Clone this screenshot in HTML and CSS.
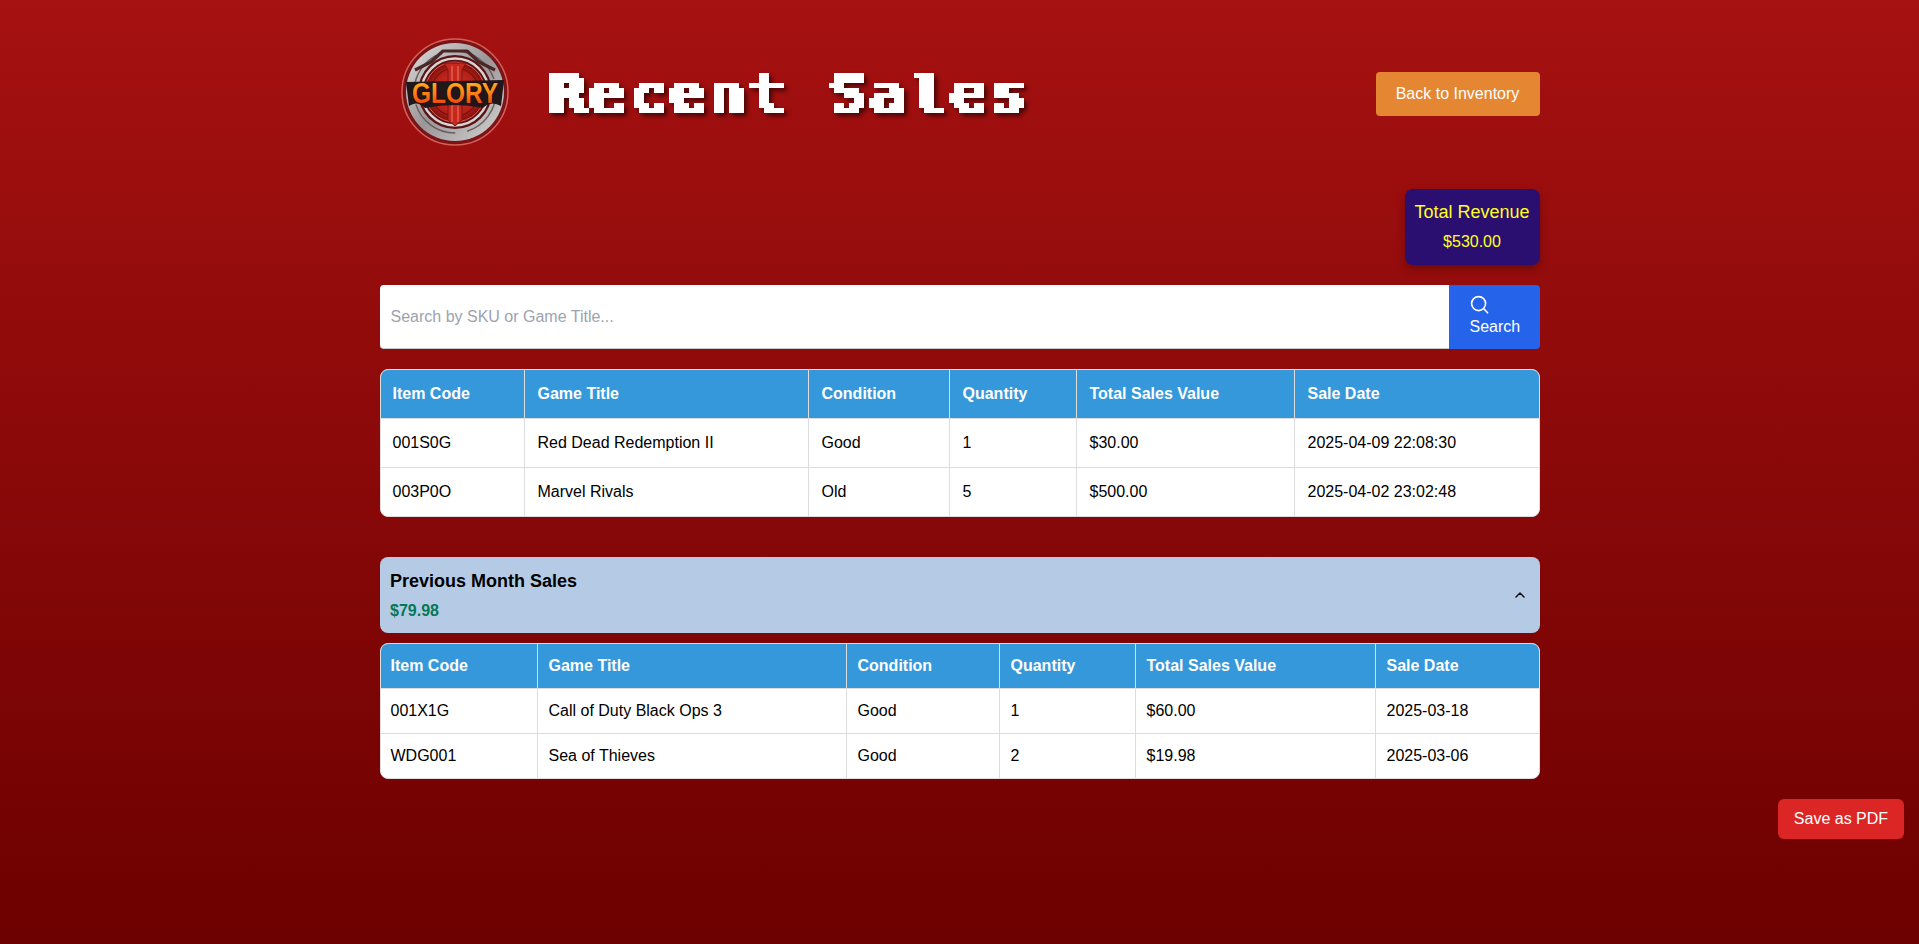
FILE: index.html
```html
<!DOCTYPE html>
<html lang="en">
<head>
<meta charset="utf-8">
<title>Recent Sales</title>
<link rel="stylesheet" href="styles.css">
</head>
<body>
<svg class="defs" width="0" height="0" aria-hidden="true">
  <filter id="pixelate" x="0" y="0" width="100%" height="100%" color-interpolation-filters="sRGB">
    <feMorphology in="SourceGraphic" operator="dilate" radius="3 1" result="thick"/>
    <feFlood x="2" y="2" width="1" height="1" flood-color="#fff"/>
    <feComposite width="5" height="5"/>
    <feTile result="grid"/>
    <feComposite in="thick" in2="grid" operator="in"/>
    <feMorphology operator="dilate" radius="2"/>
    <feComponentTransfer>
      <feFuncR type="discrete" tableValues="1"/>
      <feFuncG type="discrete" tableValues="1"/>
      <feFuncB type="discrete" tableValues="1"/>
      <feFuncA type="discrete" tableValues="0 1 1"/>
    </feComponentTransfer>
  </filter>
</svg>
<main class="page">
  <header class="top">
    <div class="brand">
      <svg class="logo" viewBox="0 0 120 120" role="img" aria-label="Glory logo">
        <defs>
          <linearGradient id="steel" x1="0" y1="0" x2="1" y2="1">
            <stop offset="0" stop-color="#e2dfdf"/><stop offset=".5" stop-color="#9a9697"/><stop offset="1" stop-color="#d8d5d5"/>
          </linearGradient>
          <radialGradient id="core"><stop offset="0" stop-color="#d8352a"/><stop offset=".75" stop-color="#b32018"/><stop offset="1" stop-color="#7d110e"/></radialGradient>
          <linearGradient id="word" x1="0" y1="0" x2="0" y2="1">
            <stop offset="0" stop-color="#ffc21f"/><stop offset=".55" stop-color="#ff7a14"/><stop offset="1" stop-color="#e0280c"/>
          </linearGradient>
        </defs>
        <circle cx="60" cy="60" r="53" fill="#7a1416" stroke="#d8605a" stroke-width="1.5"/>
        <circle cx="60" cy="60" r="49" fill="url(#steel)"/>
        <circle cx="60" cy="60" r="41" fill="none" stroke="#6a5c5c" stroke-width="1.5" stroke-dasharray="52 12"/>
        <path d="M20 38 L36 30 L48 19 L72 19 L84 30 L100 38" fill="none" stroke="#4a2626" stroke-width="3.2" stroke-linejoin="round"/>
        <circle cx="60" cy="60" r="37" fill="#5a1415"/>
        <circle cx="60" cy="60" r="33.5" fill="none" stroke="#d8d4d4" stroke-width="2.4"/>
        <circle cx="60" cy="60" r="30" fill="url(#core)" stroke="#f0574a" stroke-width="1"/>
        <circle cx="60" cy="60" r="24" fill="none" stroke="#7d110e" stroke-width="1.2"/>
        <path d="M49 31H71L67 38V88L60 94L53 88V38Z" fill="#c5281e" stroke="#7e1512" stroke-width="1"/>
        <path d="M57 34V90M63 34V90" stroke="#f06a4f" stroke-width="1.2"/>
        <path d="M11 50 L109 48 L106 74 Q96 68 88 76 Q60 70 30 76 Q22 68 14 74 Z" fill="#21161a"/>
        <text class="logo-word" x="60" y="71" text-anchor="middle" textLength="86" lengthAdjust="spacingAndGlyphs">GLORY</text>
      </svg>
      <h1 class="title"><span class="title-text">Recent Sales</span></h1>
    </div>
    <a class="back" href="#">Back to Inventory</a>
  </header>

  <section class="revenue-row">
    <div class="revenue">
      <div class="revenue-label">Total Revenue</div>
      <div class="revenue-value">$530.00</div>
    </div>
  </section>

  <form class="search">
    <input class="search-input" type="text" placeholder="Search by SKU or Game Title...">
    <button class="search-btn" type="button">
      <svg class="search-icon" viewBox="0 0 20 20" fill="none" stroke="currentColor" stroke-width="1.6" stroke-linecap="round"><circle cx="8.6" cy="8.6" r="7"/><path d="M13.8 13.8 17.6 17.8"/></svg>
      <span>Search</span>
    </button>
  </form>

  <div class="table-wrap">
    <table class="sales sales-current">
      <colgroup><col class="c1"><col class="c2"><col class="c3"><col class="c4"><col class="c5"><col class="c6"></colgroup>
      <thead><tr><th>Item Code</th><th>Game Title</th><th>Condition</th><th>Quantity</th><th>Total Sales Value</th><th>Sale Date</th></tr></thead>
      <tbody>
        <tr><td>001S0G</td><td>Red Dead Redemption II</td><td>Good</td><td>1</td><td>$30.00</td><td>2025-04-09 22:08:30</td></tr>
        <tr><td>003P0O</td><td>Marvel Rivals</td><td>Old</td><td>5</td><td>$500.00</td><td>2025-04-02 23:02:48</td></tr>
      </tbody>
    </table>
  </div>

  <div class="prev-head">
    <div>
      <div class="prev-title">Previous Month Sales</div>
      <div class="prev-total">$79.98</div>
    </div>
    <svg class="chevron" viewBox="0 0 12 12" fill="none" stroke="currentColor" stroke-width="1.5" stroke-linecap="round" stroke-linejoin="round"><path d="M2 8 6 4 10 8"/></svg>
  </div>

  <div class="table-wrap table-prev">
    <table class="sales sales-prev">
      <colgroup><col class="p1"><col class="p2"><col class="p3"><col class="p4"><col class="p5"><col class="p6"></colgroup>
      <thead><tr><th>Item Code</th><th>Game Title</th><th>Condition</th><th>Quantity</th><th>Total Sales Value</th><th>Sale Date</th></tr></thead>
      <tbody>
        <tr><td>001X1G</td><td>Call of Duty Black Ops 3</td><td>Good</td><td>1</td><td>$60.00</td><td>2025-03-18</td></tr>
        <tr><td>WDG001</td><td>Sea of Thieves</td><td>Good</td><td>2</td><td>$19.98</td><td>2025-03-06</td></tr>
      </tbody>
    </table>
  </div>
</main>
<button class="pdf" type="button">Save as PDF</button>
</body>
</html>
```
FILE: styles.css
```css
* { box-sizing: border-box; }
html, body { height: 100%; }
body {
  margin: 0;
  min-height: 944px;
  overflow: hidden;
  background: linear-gradient(to bottom, #a61111, #6d0000);
  font-family: "Liberation Sans", Arial, sans-serif;
  font-size: 16px;
  color: #000;
}
.defs { position: absolute; }
.page { width: 1160px; margin: 0 auto; padding-top: 33px; }

.top { display: flex; align-items: center; justify-content: space-between; height: 120px; }
.brand { display: flex; align-items: center; gap: 34px; }
.logo { width: 120px; height: 120px; margin-left: 15px; margin-top: -2px; display: block; }
.logo-word { font-family: "Liberation Sans", Arial, sans-serif; font-weight: 700; font-size: 29px; fill: url(#word); stroke: #1d0c0c; stroke-width: 1.2; paint-order: stroke; }
.title {
  margin: 4px 0 0;
  width: 520px;
  height: 64px;
  filter: url(#pixelate) drop-shadow(3px 3px 2px rgba(0, 0, 0, .55));
  color: #fff;
}
.title-text {
  display: inline-block;
  transform: scaleX(1.2);
  transform-origin: left top;
  font-family: "DejaVu Sans Mono", monospace;
  font-weight: 400;
  font-size: 49px;
  line-height: 64px;
  letter-spacing: 4px;
  white-space: nowrap;
}
.back {
  display: block;
  width: 164px;
  height: 44px;
  margin-top: 2px;
  line-height: 44px;
  text-align: center;
  color: #fff;
  background: #e58632;
  border-radius: 4px;
  text-decoration: none;
}

.revenue-row { display: flex; justify-content: flex-end; margin-top: 36px; }
.revenue {
  width: 135px;
  height: 76px;
  padding-top: 13px;
  text-align: center;
  background: #2a0f70;
  border-radius: 8px;
  color: #ffff1f;
  box-shadow: 0 4px 8px rgba(0, 0, 0, .25);
}
.revenue-label { font-size: 18px; line-height: 21px; }
.revenue-value { margin-top: 10px; line-height: 18px; }

.search { display: flex; height: 64px; margin-top: 20px; }
.search-input {
  flex: 1;
  min-width: 0;
  height: 64px;
  padding: 0 11px;
  border: 0;
  border-bottom: 1px solid #c8c8c8;
  border-radius: 4px 0 0 4px;
  background: #fff;
  font: 16px "Liberation Sans", Arial, sans-serif;
}
.search-input::placeholder { color: #9ca3af; opacity: 1; }
.search-btn {
  display: flex;
  flex-direction: column;
  align-items: flex-start;
  width: 91px;
  height: 64px;
  padding: 10px 0 0 21px;
  border: 0;
  border-radius: 0 4px 4px 0;
  background: #2563eb;
  color: #fff;
  font: 16px/18px "Liberation Sans", Arial, sans-serif;
}
.search-icon { display: block; width: 20px; height: 20px; margin-bottom: 3px; }

.table-wrap {
  margin-top: 20px;
  background: #fff;
  border: 1px solid #ddd;
  border-radius: 8px;
  overflow: hidden;
}
.sales { width: 100%; border-collapse: separate; border-spacing: 0; table-layout: fixed; }
.sales th { background: #3498db; color: #fff; font-weight: 700; text-align: left; }
.sales th, .sales td { border-right: 1px solid #ddd; border-top: 1px solid #ddd; white-space: nowrap; }
.sales th:last-child, .sales td:last-child { border-right: 0; }
.sales thead th { border-top: 0; }
.sales-current th { height: 48px; padding: 0 12px 0 13px; }
.sales-current td { height: 49px; padding: 0 12px 0 13px; }
.sales-current th:first-child, .sales-current td:first-child { padding-left: 12px; }
.sales-prev th, .sales-prev td { padding: 0 10px 0 11px; }
.sales-prev th:first-child, .sales-prev td:first-child { padding-left: 10px; }
.sales-prev th { height: 44px; }
.sales-prev td { height: 45px; }
.c1 { width: 144px; } .c2 { width: 284px; } .c3 { width: 141px; }
.c4 { width: 127px; } .c5 { width: 218px; } .c6 { width: auto; }
.p1 { width: 157px; } .p2 { width: 309px; } .p3 { width: 153px; }
.p4 { width: 136px; } .p5 { width: 240px; } .p6 { width: auto; }

.prev-head {
  display: flex;
  align-items: center;
  justify-content: space-between;
  height: 76px;
  margin-top: 40px;
  padding: 0 14px 0 10.5px;
  background: #b5cbe5;
  border-radius: 8px;
}
.prev-title { font-size: 18px; font-weight: 700; line-height: 21px; }
.prev-total { margin-top: 10px; color: #047857; font-weight: 700; line-height: 18px; }
.chevron { width: 12px; height: 12px; color: #111; margin-top: -1px; }
.table-prev { margin-top: 10px; }

.pdf {
  position: fixed;
  top: 799px;
  right: 15px;
  width: 126px;
  height: 40px;
  border: 0;
  border-radius: 6px;
  background: #dc2626;
  color: #fff;
  font: 16px "Liberation Sans", Arial, sans-serif;
}
```
